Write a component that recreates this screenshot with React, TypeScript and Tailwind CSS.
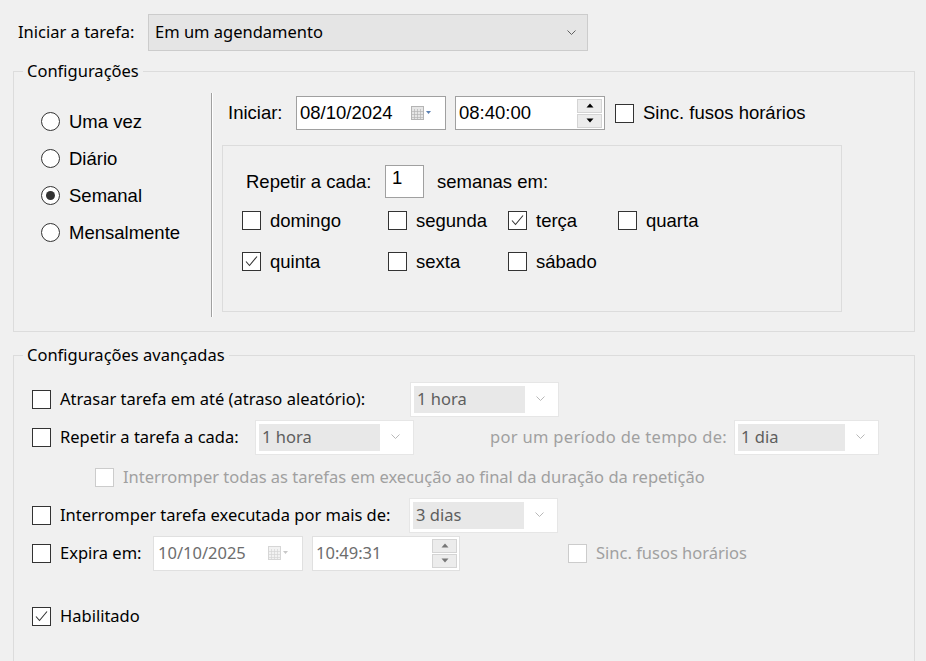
import type { ReactNode } from 'react'

const segoe = "font-['Segoe_UI','Noto_Sans',sans-serif]"

function Chevron({ color = '#606060' }: { color?: string }) {
  return (
    <svg width="9" height="6" viewBox="0 0 9 6" fill="none">
      <polyline points="0.5,0.5 4.5,4.5 8.5,0.5" stroke={color} strokeWidth="1" />
    </svg>
  )
}

function CalendarIcon({ disabled }: { disabled?: boolean }) {
  const c = disabled ? '#d6d6d6' : '#b4b4b4'
  return (
    <svg width="20" height="14" viewBox="0 0 20 14">
      <rect x="0.5" y="0.5" width="12" height="13" fill={disabled ? '#f2f2f2' : '#e6e6e6'} stroke={c} />
      <path d="M3.5 3v10M6.5 3v10M9.5 3v10M1 5.5h11M1 8.5h11M1 11.5h11" stroke={c} strokeWidth="0.7" />
      <path d="M15 5h5l-2.5 3z" fill={disabled ? '#c8c8c8' : '#5a7fb0'} />
    </svg>
  )
}

function Checkbox({ checked, disabled }: { checked?: boolean; disabled?: boolean }) {
  return (
    <span
      className={`flex w-[19px] h-[19px] shrink-0 items-center justify-center border bg-white ${
        disabled ? 'border-[#cccccc]' : 'border-[#333333]'
      }`}
    >
      {checked && (
        <svg width="13" height="11" viewBox="0 0 13 11" fill="none">
          <polyline points="1,5.5 4.5,9.5 12,0.5" stroke="#333" strokeWidth="1.1" />
        </svg>
      )}
    </span>
  )
}

function Radio({ selected, label }: { selected?: boolean; label: string }) {
  return (
    <div className="flex h-[37px] items-center gap-[9px]">
      <span className="flex w-[19px] h-[19px] items-center justify-center rounded-full border border-[#333333] bg-white">
        {selected && <span className="w-[9px] h-[9px] rounded-full bg-[#333333]" />}
      </span>
      <span>{label}</span>
    </div>
  )
}

function Spinner({ disabled }: { disabled?: boolean }) {
  const tri = disabled ? '#777' : '#000'
  return (
    <div className="flex flex-col gap-[1px] mr-[2px]">
      {[0, 1].map(i => (
        <span
          key={i}
          className="flex w-[25px] h-[14px] items-center justify-center border border-[#d4d4d4] bg-[#ececec]"
        >
          <svg width="8" height="5" viewBox="0 0 8 5">
            <path d={i === 0 ? 'M0.5 4.5h7L4 0.5z' : 'M0.5 0.5h7L4 4.5z'} fill={tri} />
          </svg>
        </span>
      ))}
    </div>
  )
}

function DisabledCombo({ value, width }: { value: string; width: string }) {
  return (
    <div className={`flex h-[35px] items-center border border-[#e6e6e6] bg-white p-[3px] ${width}`}>
      <div className="flex h-full flex-1 items-center bg-[#e8e8e8] pl-[3px] text-[#5e5e5e]">{value}</div>
      <div className="flex w-[30px] justify-center">
        <Chevron color="#b8b8b8" />
      </div>
    </div>
  )
}

function Row({ children, className = '' }: { children: ReactNode; className?: string }) {
  return <div className={`flex h-[38px] items-center ${className}`}>{children}</div>
}

export default function App() {
  const days = [
    ['domingo', false],
    ['segunda', false],
    ['terça', true],
    ['quarta', false],
    ['quinta', true],
    ['sexta', false],
    ['sábado', false],
  ] as const

  return (
    <div className={`w-[926px] h-[661px] overflow-hidden bg-[#f0f0f0] text-black ${segoe}`}>
      {/* Iniciar a tarefa */}
      <div className="flex items-center pt-[14px] pl-[18px] text-[16.5px]">
        <span className="w-[130px]">Iniciar a tarefa:</span>
        <div className="flex h-[37px] w-[440px] items-center justify-between border border-[#cccccc] bg-[#e5e5e5] pl-[6px] pr-[11px]">
          <span>Em um agendamento</span>
          <Chevron />
        </div>
      </div>

      {/* Configurações */}
      <fieldset className="ml-[13px] mt-[10px] h-[271px] w-[902px] border border-[#dcdcdc]">
        <legend className="ml-[9px] px-[4px] text-[16.5px] leading-[20px]">Configurações</legend>
        <div className="flex font-['Liberation_Sans',Arial,sans-serif] text-[18.5px]">
          <div className="flex w-[197px] flex-col pl-[27px] pt-[22px]">
            <Radio label="Uma vez" />
            <Radio label="Diário" />
            <Radio selected label="Semanal" />
            <Radio label="Mensalmente" />
          </div>
          <div className="mt-[12px] h-[224px] w-[2px] border-l border-r border-l-[#a0a0a0] border-r-white" />
          <div className="flex flex-col pl-[9px] pt-[15px]">
            <div className="flex items-center pl-[6px]">
              <span className="w-[68px]">Iniciar:</span>
              <div className="flex h-[34px] w-[150px] items-center justify-between border border-[#a0a0a0] bg-white pl-[3px] pr-[14px]">
                <span>08/10/2024</span>
                <CalendarIcon />
              </div>
              <div className="ml-[9px] flex h-[34px] w-[150px] items-center justify-between border border-[#a0a0a0] bg-white pl-[3px]">
                <span>08:40:00</span>
                <Spinner />
              </div>
              <span className="ml-[10px]">
                <Checkbox />
              </span>
              <span className="ml-[9px]">Sinc. fusos horários</span>
            </div>

            <div className="mt-[15px] h-[167px] w-[620px] border border-[#dcdcdc] pl-[19px] pt-[19px]">
              <div className="flex items-center">
                <span className="ml-[4px] w-[139px]">Repetir a cada:</span>
                <div className="h-[33px] w-[39px] border border-[#a0a0a0] bg-white pl-[6px] leading-[24px]">1</div>
                <span className="ml-[13px]">semanas em:</span>
              </div>
              <div className="mt-[2px] grid grid-cols-[146px_120px_110px_auto]">
                {days.map(([d, c]) => (
                  <div key={d} className="flex h-[41px] items-center gap-[9px]">
                    <Checkbox checked={c} />
                    <span>{d}</span>
                  </div>
                ))}
              </div>
            </div>
          </div>
        </div>
      </fieldset>

      {/* Configurações avançadas */}
      <fieldset className="ml-[13px] mt-[13px] h-[340px] w-[902px] border border-[#dcdcdc] text-[16.5px]">
        <legend className="ml-[9px] px-[4px] leading-[20px]">Configurações avançadas</legend>
        <div className="flex flex-col pl-[18px] pt-[15px]">
          <Row>
            <Checkbox />
            <span className="ml-[9px] w-[350px]">Atrasar tarefa em até (atraso aleatório):</span>
            <DisabledCombo value="1 hora" width="w-[149px]" />
          </Row>
          <Row>
            <Checkbox />
            <span className="ml-[9px] w-[195px]">Repetir a tarefa a cada:</span>
            <DisabledCombo value="1 hora" width="w-[159px]" />
            <span className="w-[320px] pr-[7px] text-right text-[#a0a0a0] tracking-[0.3px]">
              por um período de tempo de:
            </span>
            <DisabledCombo value="1 dia" width="w-[145px]" />
          </Row>
          <Row className="mt-[2px] pl-[63px]">
            <Checkbox disabled />
            <span className="ml-[9px] text-[#a0a0a0]">
              Interromper todas as tarefas em execução ao final da duração da repetição
            </span>
          </Row>
          <Row>
            <Checkbox />
            <span className="ml-[9px] w-[349px]">Interromper tarefa executada por mais de:</span>
            <DisabledCombo value="3 dias" width="w-[149px]" />
          </Row>
          <Row>
            <Checkbox />
            <span className="ml-[9px] w-[93px]">Expira em:</span>
            <div className="flex h-[35px] w-[150px] items-center justify-between border border-[#e0e0e0] bg-white pl-[4px] pr-[14px] text-[#6d6d6d]">
              <span>10/10/2025</span>
              <CalendarIcon disabled />
            </div>
            <div className="ml-[9px] flex h-[35px] w-[148px] items-center justify-between border border-[#e0e0e0] bg-white pl-[3px] text-[#6d6d6d]">
              <span>10:49:31</span>
              <Spinner disabled />
            </div>
            <span className="ml-[108px]">
              <Checkbox disabled />
            </span>
            <span className="ml-[9px] text-[#a0a0a0]">Sinc. fusos horários</span>
          </Row>
          <Row className="mt-[25px]">
            <Checkbox checked />
            <span className="ml-[9px]">Habilitado</span>
          </Row>
        </div>
      </fieldset>
    </div>
  )
}
